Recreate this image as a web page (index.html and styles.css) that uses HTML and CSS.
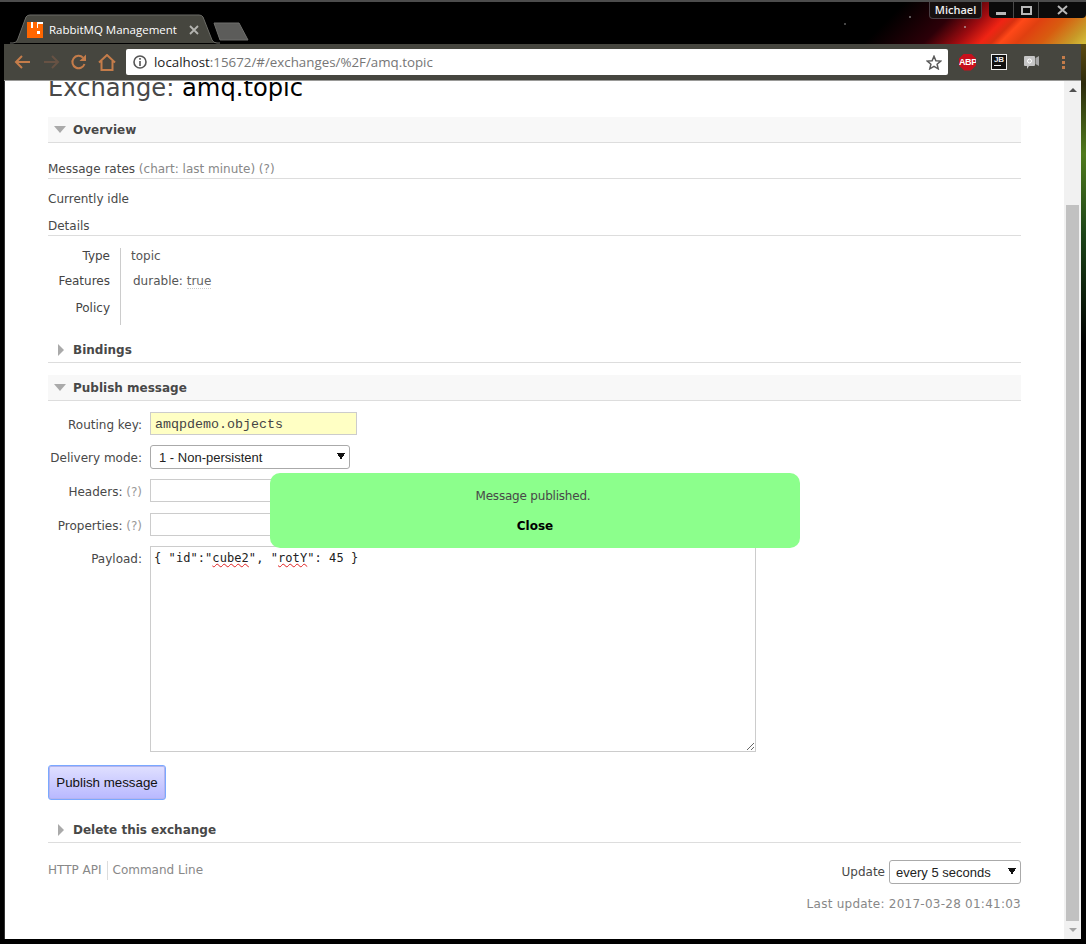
FILE: index.html
```html
<!DOCTYPE html>
<html lang="en">
<head>
    <meta charset="UTF-8">
    <meta name="viewport" content="width=device-width, initial-scale=1.0">
    <title>RabbitMQ Management</title>
    <link rel="stylesheet" href="styles.css">
</head>
<body>
<div class="window">

    <!-- title bar with tab strip -->
    <div class="titlebar">
        <div class="tab">
            <svg class="tab-shape" width="210" height="30" viewBox="0 0 210 30">
                <path d="M0 29 L3 29 Q6 29 7.5 26 L16 3 Q17 1 20 1 L189 1 Q192 1 193 3 L202 26 Q203.500 29 207 29 L210 29" fill="#46463f" stroke="#6b6b66"/>
            </svg>
            <svg class="favicon" width="16" height="16" viewBox="0 0 16 16">
                <rect width="16" height="16" fill="#fff"/>
                <path d="M0 0H4V6H6V0H10V6H11V2H16V16H0Z" fill="#ff6600"/>
                <rect x="10" y="9" width="3" height="3" fill="#fff"/>
            </svg>
            <span class="tab-title">RabbitMQ Management</span>
            <svg class="tab-close" width="10" height="10" viewBox="0 0 10 10">
                <path d="M1 1L9 9M9 1L1 9" stroke="#b4b4b0" stroke-width="1.800"/>
            </svg>
        </div>
        <svg class="new-tab" width="36" height="19" viewBox="0 0 36 19">
            <path d="M1 1H26L35 18H7Z" fill="#5c5c5a" stroke="#6f6f6c"/>
        </svg>
        <div class="caption">
            <div class="profile">Michael</div>
            <div class="win-buttons">
                <div class="win-btn"><span class="min-glyph"></span></div>
                <div class="win-btn"><span class="max-glyph"></span></div>
                <div class="win-btn win-close">
                    <svg width="11" height="10" viewBox="0 0 11 10"><path d="M1 1L10 9M10 1L1 9" stroke="#b8b8b8" stroke-width="2"/></svg>
                </div>
            </div>
        </div>
    </div>

    <div class="frame-body">
        <div class="browser">

            <div class="toolbar">
                <svg class="tool-icon" width="18" height="16" viewBox="0 0 18 16">
                    <path d="M16 8H2M8 2L2 8L8 14" fill="none" stroke="#c47c4a" stroke-width="2"/>
                </svg>
                <svg class="tool-icon" width="18" height="16" viewBox="0 0 18 16">
                    <path d="M2 8H16M10 2L16 8L10 14" fill="none" stroke="#675244" stroke-width="2"/>
                </svg>
                <svg class="tool-icon" width="18" height="16" viewBox="0 0 18 16">
                    <path d="M14.500 10A6.200 6.200 0 1 1 13 3.600" fill="none" stroke="#c47c4a" stroke-width="2"/>
                    <path d="M16 0.500V7H9.500Z" fill="#c47c4a"/>
                </svg>
                <svg class="tool-icon" width="18" height="17" viewBox="0 0 18 17">
                    <path d="M1 8.500L9 1L17 8.500M3.500 7V16H14.500V7" fill="none" stroke="#c47c4a" stroke-width="2"/>
                </svg>
                <div class="omnibox">
                    <svg width="14" height="14" viewBox="0 0 14 14">
                        <circle cx="7" cy="7" r="6" fill="none" stroke="#555" stroke-width="1.600"/>
                        <path d="M7 6V11M7 3V4.800" stroke="#555" stroke-width="1.600"/>
                    </svg>
                    <span class="url"><span class="url-host">localhost</span>:15672/#/exchanges/%2F/amq.topic</span>
                    <svg class="star" width="16" height="15" viewBox="0 0 16 15">
                        <path d="M8 1.300L9.900 5.700L14.700 6.100L11.100 9.200L12.200 13.800L8 11.400L3.800 13.800L4.900 9.200L1.300 6.100L6.100 5.700Z" fill="none" stroke="#5a5a5a" stroke-width="1.500"/>
                    </svg>
                </div>
                <div class="extensions">
                    <div class="ext-abp">ABP</div>
                    <div class="ext-jb"><span>JB</span><i></i></div>
                    <svg class="ext-chat" width="16" height="15" viewBox="0 0 16 15">
                        <path d="M2 1H11Q12 1 12 2V10Q12 11 11 11H6L4 14V11H2Q1 11 1 10V2Q1 1 2 1Z" fill="#c6c6c6"/>
                        <path d="M12.500 3L16 1V11L12.500 9Z" fill="#a8a8a8"/>
                        <circle cx="6.500" cy="6" r="2" fill="none" stroke="#fff"/>
                    </svg>
                    <div class="ext-menu"><i></i><i></i><i></i></div>
                </div>
            </div>

            <div class="viewport">
                <div class="page">
                    <h1 class="page-title">Exchange: <b>amq.topic</b></h1>

                    <div class="section-head open"><span class="arrow-down"></span>Overview</div>

                    <h3 class="sub-head first">Message rates <span class="muted">(chart: last minute) (?)</span></h3>
                    <p class="idle">Currently idle</p>
                    <h3 class="sub-head">Details</h3>

                    <div class="facts">
                        <div class="fact-row row-a"><div class="fact-label">Type</div><div class="fact-value">topic</div></div>
                        <div class="fact-row row-b"><div class="fact-label">Features</div><div class="fact-value indent">durable: <span class="dotted">true</span></div></div>
                        <div class="fact-row row-a"><div class="fact-label">Policy</div><div class="fact-value"></div></div>
                    </div>

                    <div class="section-head closed first-closed"><span class="arrow-right"></span>Bindings</div>
                    <div class="section-head open"><span class="arrow-down"></span>Publish message</div>

                    <form class="publish-form">
                        <label class="form-label">Routing key:</label>
                        <input class="text-field routing" type="text" value="amqpdemo.objects">

                        <label class="form-label">Delivery mode:</label>
                        <select class="drop mode-select"><option>1 - Non-persistent</option></select>

                        <label class="form-label">Headers: <span class="help">(?)</span></label>
                        <input class="text-field small-field headers-field" type="text">

                        <label class="form-label">Properties: <span class="help">(?)</span></label>
                        <input class="text-field small-field" type="text">

                        <label class="form-label">Payload:</label>
                        <div class="payload">{ "id":"<span class="typo">cube2</span>", "<span class="typo">rotY</span>": 45 }</div>
                    </form>

                    <button class="publish-btn" type="button">Publish message</button>

                    <div class="section-head closed delete-head"><span class="arrow-right"></span>Delete this exchange</div>

                    <div class="footer">
                        <div class="footer-links"><span>HTTP API</span><span class="link-sep">Command Line</span></div>
                        <div class="update">
                            <div class="update-row">
                                <span>Update</span>
                                <select class="drop update-select"><option>every 5 seconds</option></select>
                            </div>
                            <div class="last-update">Last update: 2017-03-28 01:41:03</div>
                        </div>
                    </div>
                </div>

                <div class="scrollbar">
                    <div class="scroll-btn"><span class="scroll-up"></span></div>
                    <div class="scroll-gap"></div>
                    <div class="scroll-thumb"></div>
                    <div class="scroll-btn"><span class="scroll-down"></span></div>
                </div>

                <!-- toast sits over the form -->
                <div class="toast">
                    <div class="toast-text">Message published.</div>
                    <div class="toast-close">Close</div>
                </div>
            </div>
        </div>
        <div class="frame-edge"></div>
    </div>
</div>
</body>
</html>
```

FILE: styles.css
```css
* {
    box-sizing: border-box;
}

html, body {
    margin: 0;
    height: 100%;
    overflow: hidden;
    background-color: #000;
}

body {
    font-family: "DejaVu Sans", Verdana, sans-serif;
    font-size: 12px;
    color: #484848;
}

.window {
    width: 1086px;
    height: 944px;
    display: flex;
    flex-direction: column;
    overflow: hidden;
}

/* title bar */
.titlebar {
    height: 44px;
    flex: none;
    display: flex;
    align-items: flex-start;
    padding-left: 10px;
    border-top: 2px solid #4c4c4c;
    background:
        radial-gradient(circle at 910px 15px, #999 0, #999 0.5px, transparent 1px),
        radial-gradient(circle at 965px 25px, #bbb 0, #bbb 0.5px, transparent 1px),
        radial-gradient(circle at 845px 22px, #777 0, #777 0.5px, transparent 1px),
        linear-gradient(135deg, #000 0, #000 640px, #2c0008 682px, #a00c10 706px, #f02414 722px, #d83010 730px, #ff4818 736px, #e04010 748px, #d85c10 765px, #c89a28 785px, #d8c840 800px);
}

.tab {
    position: relative;
    width: 205px;
    height: 29px;
    margin-top: 13px;
    display: flex;
    align-items: center;
    padding-left: 17px;
    flex: none;
}

.tab-shape {
    position: absolute;
    left: 0;
    top: -1px;
}

.favicon, .tab-title, .tab-close {
    position: relative;
}

.tab-title {
    margin-left: 6px;
    font-family: "Open Sans", "Liberation Sans", sans-serif;
    font-size: 11.5px;
    color: #fff;
    white-space: nowrap;
    width: 135px;
}

.tab-close {
    margin-left: 5px;
}

.new-tab {
    margin: 20px 0 0 -2px;
    flex: none;
}

.caption {
    margin-left: auto;
    display: flex;
    gap: 7px;
}

.profile {
    width: 53px;
    height: 17px;
    border: 1px solid #4a4046;
    border-top: none;
    border-radius: 0 0 4px 4px;
    background-color: #16100f;
    color: #eee;
    font-family: "Open Sans", "Liberation Sans", sans-serif;
    font-size: 11px;
    font-weight: 600;
    text-align: center;
    line-height: 16px;
}

.win-buttons {
    width: 97px;
    height: 16px;
    display: flex;
    background-color: #0b0b0b;
    border-radius: 0 0 4px 4px;
}

.win-btn {
    width: 25px;
    height: 16px;
    display: flex;
    align-items: center;
    justify-content: center;
    border-right: 1px solid #4a4a4a;
}

.win-close {
    width: 47px;
    border-right: none;
}

.min-glyph {
    width: 10px;
    height: 3px;
    margin-top: 6px;
    background-color: #b8b8b8;
}

.max-glyph {
    width: 11px;
    height: 9px;
    border: 2px solid #b8b8b8;
}

/* everything under the title bar */
.frame-body {
    flex: 1;
    min-height: 0;
    display: flex;
    padding: 0 0 5px 4px;
}

.browser {
    flex: 1;
    min-width: 0;
    display: flex;
    flex-direction: column;
}

.frame-edge {
    width: 5px;
    flex: none;
    background: linear-gradient(#5c4a10 0, #2c2a0c 40px, #4f7a1c 110px, #1c4418 190px, #000 300px);
}

.toolbar {
    height: 37px;
    flex: none;
    display: flex;
    align-items: center;
    padding-left: 10px;
    background-color: #46463f;
    border-bottom: 1px solid #9a9a98;
}

.tool-icon {
    width: 18px;
    margin-right: 10px;
    flex: none;
}

.omnibox {
    width: 822px;
    height: 26px;
    margin-left: 0;
    display: flex;
    align-items: center;
    padding: 0 6px 0 7px;
    background-color: #fff;
    border-radius: 2px;
    flex: none;
}

.url {
    margin-left: 7px;
    font-family: "Open Sans", "Liberation Sans", sans-serif;
    font-size: 13.33px;
    color: #767676;
    white-space: nowrap;
}

.url-host {
    color: #222;
}

.star {
    margin-left: auto;
}

.extensions {
    flex: 1;
    display: flex;
    align-items: center;
    padding-left: 11px;
    gap: 14px;
}

.ext-abp {
    width: 17px;
    height: 17px;
    clip-path: polygon(30% 0, 70% 0, 100% 30%, 100% 70%, 70% 100%, 30% 100%, 0 70%, 0 30%);
    background-color: #c8101c;
    color: #fff;
    font-family: "Liberation Sans", sans-serif;
    font-size: 9px;
    font-weight: bold;
    letter-spacing: -0.4px;
    text-align: center;
    line-height: 17px;
}

.ext-jb {
    width: 16px;
    height: 16px;
    margin-left: 1px;
    border: 1px solid #eee;
    background-color: #111;
    color: #eee;
    font-family: "Liberation Sans", sans-serif;
    font-size: 8px;
    font-weight: bold;
    line-height: 9px;
    text-align: center;
}

.ext-jb span {
    display: block;
}

.ext-jb i {
    display: block;
    width: 7px;
    height: 1px;
    margin: 1px 0 0 2px;
    background-color: #eee;
}

.ext-chat {
    margin-left: 2px;
}

.ext-menu {
    margin-left: 9px;
    display: flex;
    flex-direction: column;
    gap: 2px;
}

.ext-menu i {
    width: 3px;
    height: 3px;
    background-color: #c47c4a;
}

/* page area */
.viewport {
    position: relative;
    flex: 1;
    min-height: 0;
    display: flex;
    background-color: #fff;
    border-left: 1px solid #333;
}

.page {
    flex: 1;
    min-width: 0;
    overflow: hidden;
    padding: 0 43px;
}

.page-title {
    margin: -8px 0 14px;
    font-size: 24.2px;
    font-weight: normal;
    line-height: 30px;
    color: #484848;
}

.page-title b {
    font-weight: normal;
    color: #000;
}

.section-head {
    height: 26px;
    display: flex;
    align-items: center;
    border-bottom: 1px solid #ddd;
    font-size: 12px;
    font-weight: bold;
    color: #484848;
}

.section-head.open {
    background-color: #f8f8f8;
    margin-top: 12px;
}

.section-head.open:first-of-type {
    margin-top: 0;
}

.first-closed {
    margin-top: 12px;
}

.arrow-down {
    width: 0;
    height: 0;
    margin: 0 7px 0 6px;
    border-left: 6px solid transparent;
    border-right: 6px solid transparent;
    border-top: 7px solid #aaa;
}

.arrow-right {
    width: 0;
    height: 0;
    margin: 0 9px 0 10px;
    border-top: 6px solid transparent;
    border-bottom: 6px solid transparent;
    border-left: 6px solid #aaa;
}

.sub-head {
    margin: 11px 0 0;
    padding: 1px 0;
    border-bottom: 1px solid #ddd;
    font-size: 12px;
    font-weight: normal;
    line-height: 16px;
}

.sub-head.first {
    margin-top: 17px;
}

.muted {
    color: #888;
}

.idle {
    margin: 11px 0 -1px;
    padding-top: 1px;
    line-height: 16px;
}

.facts {
    margin-top: 12px;
    line-height: 16px;
}

.fact-row {
    display: flex;
    color: #444;
}

.row-a {
    height: 25px;
}

.row-b {
    height: 27px;
}

.fact-label {
    width: 73px;
    padding-right: 10px;
    text-align: right;
    border-right: 1px solid #ccc;
}

.fact-value {
    padding-left: 10px;
    color: #555;
}

.fact-value.indent {
    padding-left: 12px;
}

.dotted {
    color: #666;
    border-bottom: 1px dotted #ccc;
}

.publish-form {
    margin-top: 11px;
    display: grid;
    grid-template-columns: 94px 1fr;
    column-gap: 8px;
    row-gap: 10px;
}

.form-label {
    padding-top: 4px;
    text-align: right;
    line-height: 19px;
    color: #484848;
    white-space: nowrap;
}

.help {
    color: #999;
}

.text-field {
    height: 23px;
    margin: 0;
    padding: 0 4px;
    border: 1px solid #ccc;
    background-color: #fff;
    outline: none;
}

.routing {
    width: 207px;
    padding-top: 2px;
    background-color: #ffffc4;
    font-family: "Liberation Mono", "Courier New", monospace;
    font-size: 13.33px;
    color: #444;
}

.small-field {
    width: 606px;
}

.headers-field {
    margin-bottom: 1px;
}

.drop {
    appearance: none;
    margin: 0;
    padding: 0 0 0 8px;
    border: 1px solid #aaa;
    border-radius: 3px;
    height: 24px;
    font-family: "Liberation Sans", Arial, sans-serif;
    font-size: 13px;
    color: #222;
    background-color: #fff;
    background-image:
        linear-gradient(to top right, transparent 50%, #111 50%),
        linear-gradient(to top left, transparent 50%, #111 50%);
    background-size: 4px 7px, 4px 7px;
    background-repeat: no-repeat;
}

.mode-select {
    width: 200px;
    background-position: 186px 7px, 190px 7px;
}

.payload {
    width: 606px;
    height: 206px;
    padding: 4px 3px 2px;
    border: 1px solid #ccc;
    font-family: "DejaVu Sans Mono", monospace;
    font-size: 12px;
    letter-spacing: 0.07px;
    line-height: 15px;
    color: #222;
    resize: both;
    overflow: auto;
    white-space: pre;
}

.typo {
    text-decoration: underline wavy #e02020;
    text-decoration-thickness: 1px;
}

.publish-btn {
    display: block;
    width: 118px;
    height: 35px;
    margin-top: 13px;
    padding: 0;
    border: 1px solid #7aa8ff;
    border-radius: 3px;
    box-shadow: inset 0 0 0 1px #b4b4ee;
    background: linear-gradient(#e0e0ff, #b8b8ff);
    font-family: "Liberation Sans", Arial, sans-serif;
    font-size: 13.33px;
    color: #111;
}

.delete-head {
    margin-top: 17px;
}

.footer {
    margin-top: 17px;
    display: flex;
    justify-content: space-between;
    align-items: flex-start;
}

.footer-links {
    display: flex;
    color: #888;
    line-height: 19px;
    margin-top: 1px;
}

.link-sep {
    margin-left: 5px;
    padding-left: 5px;
    border-left: 1px solid #ddd;
}

.update {
    display: flex;
    flex-direction: column;
    align-items: flex-end;
}

.update-row {
    display: flex;
    align-items: center;
    gap: 4px;
}

.update-select {
    width: 132px;
    padding-left: 6px;
    background-position: 118px 7px, 122px 7px;
}

.last-update {
    margin-top: 12px;
    color: #888;
    line-height: 16px;
    letter-spacing: 0.25px;
}

/* drawn scrollbar */
.scrollbar {
    width: 17px;
    flex: none;
    display: flex;
    flex-direction: column;
    background-color: #f1f1f1;
}

.scroll-btn {
    height: 18px;
    display: flex;
    align-items: center;
    justify-content: center;
}

.scroll-up, .scroll-down {
    width: 0;
    height: 0;
    border-left: 4px solid transparent;
    border-right: 4px solid transparent;
}

.scroll-up {
    border-bottom: 4px solid #505050;
}

.scroll-down {
    border-top: 4px solid #a3a3a3;
}

.scroll-gap {
    height: 106px;
}

.scroll-thumb {
    flex: 1;
    margin: 0 2px;
    background-color: #c1c1c1;
}

.toast {
    position: absolute;
    left: 265px;
    top: 392px;
    width: 530px;
    height: 75px;
    padding-top: 15px;
    border-radius: 10px;
    background-color: #8cff8c;
    text-align: center;
    line-height: 16px;
}

.toast-text {
    padding-right: 4px;
    letter-spacing: -0.2px;
}

.toast-close {
    margin-top: 14px;
    font-weight: bold;
    color: #000;
}
```
